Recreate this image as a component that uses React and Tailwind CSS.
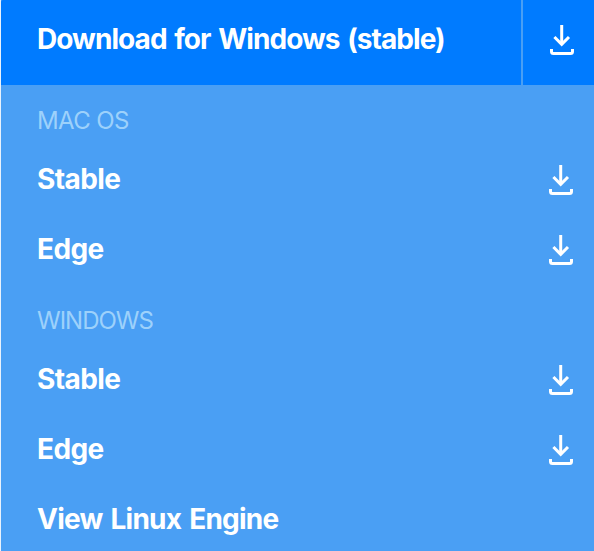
import React from 'react';

const sections = [
  { title: 'MAC OS', items: ['Stable', 'Edge'], tracking: 'tracking-[-0.6px]' },
  { title: 'WINDOWS', items: ['Stable', 'Edge'], tracking: 'tracking-[-1px]' },
];

const DownloadIcon = () => (
  <svg width="24" height="30" viewBox="0 0 24 30" fill="none" stroke="currentColor" strokeWidth="3">
    <path d="M11.700 0v19" />
    <path d="M4.400 12l7.300 7.400 7.300-7.400" />
    <path d="M1.500 24v2.500q0 2 2 2h17q2 0 2-2V24" />
  </svg>
);

const App = () => {
  return (
    <div className="flex h-[551px] w-[594px] flex-col overflow-hidden border-l border-[#e8f2fd] bg-[#4a9ff4] font-['Inter',sans-serif] text-[28px] font-bold tracking-[-0.75px] text-white [word-spacing:2px]">
      {/* Main download button */}
      <div className="flex h-[85px] shrink-0 rounded-tl-[2px] bg-[#007bff]">
        <button className="flex-1 pb-[7px] pl-9 text-left tracking-[-0.95px] [word-spacing:2px]">
          Download for Windows (stable)
        </button>
        <button className="flex w-[73px] items-center justify-end border-l-2 border-[#4a9ff4] pb-[5px] pr-5">
          <DownloadIcon />
        </button>
      </div>

      {/* Platform list */}
      {sections.map((section) => (
        <div key={section.title}>
          <h3 className={`flex h-[60px] items-center pl-9 pt-[11px] text-2xl font-normal text-[#9dd1fb] ${section.tracking} [word-spacing:0px]`}>
            {section.title}
          </h3>
          {section.items.map((item) => (
            <div key={item} className="flex h-[70px] items-center justify-between pl-9 pr-[21px]">
              <span className="pb-0.5 tracking-[-0.6px]">{item}</span>
              <DownloadIcon />
            </div>
          ))}
        </div>
      ))}
      <div className="flex h-[70px] shrink-0 items-center pb-0.5 pl-9">View Linux Engine</div>
    </div>
  );
};

export default App;
